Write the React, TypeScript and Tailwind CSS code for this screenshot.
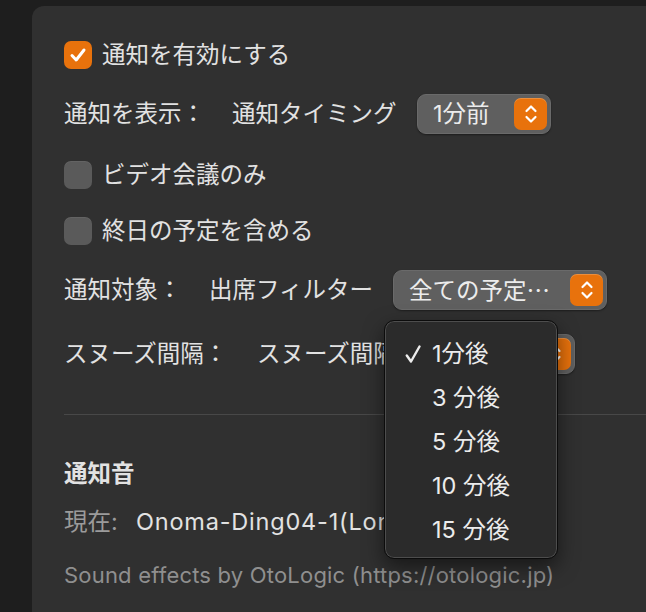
import React from "react"

const font = { fontFamily: '"Inter", "Noto Sans CJK JP", sans-serif' }
const jp = { fontFamily: '"Noto Sans CJK JP", sans-serif' }

function Stepper() {
  return (
    <div className="flex h-[32px] w-[33px] items-center justify-center rounded-[7px] bg-[#e8720c] shadow-[inset_0_1px_0_rgba(255,255,255,0.2)]">
      <svg width="14" height="22" viewBox="0 0 14 22" fill="none">
        <path d="M2.5 8 L7 3.5 L11.5 8" stroke="white" strokeWidth="2.2" strokeLinecap="round" strokeLinejoin="round" />
        <path d="M2.5 14 L7 18.5 L11.5 14" stroke="white" strokeWidth="2.2" strokeLinecap="round" strokeLinejoin="round" />
      </svg>
    </div>
  )
}

function Popup({ label, width }: { label: React.ReactNode; width: string }) {
  return (
    <div
      className={`flex h-[40px] ${width} items-center justify-between rounded-[9px] border border-[#6a6a6a] bg-[#5f5f5f] pl-[15px] pr-[3px] shadow-[0_1px_2px_rgba(0,0,0,0.4)]`}
    >
      <span className="text-[#ececec]">{label}</span>
      <Stepper />
    </div>
  )
}

function Checkbox({ checked }: { checked?: boolean }) {
  if (checked) {
    return (
      <div className="flex h-[28px] w-[28px] items-center justify-center rounded-[7px] bg-[#e8720c]">
        <svg width="18" height="16" viewBox="0 0 18 16" fill="none">
          <path d="M3 8.5 L7.2 13 L15 3" stroke="white" strokeWidth="3" strokeLinecap="round" strokeLinejoin="round" />
        </svg>
      </div>
    )
  }
  return <div className="h-[28px] w-[28px] rounded-[7px] bg-[#5a5a5a] shadow-[inset_0_1px_0_rgba(255,255,255,0.06)]" />
}

const items = ["1分後", "3 分後", "5 分後", "10 分後", "15 分後"]

export default function App() {
  return (
    <div
      className="relative h-[612px] w-[646px] overflow-hidden bg-[#1e1e1e] pl-[32px] pt-[6px] text-[23.5px] leading-none text-[#e2e2e2]"
      style={font}
    >
      <div className="flex h-full flex-col rounded-tl-[12px] bg-[#303030] pl-[32px] pt-[35px]">
        {/* Enable */}
        <div className="flex h-[28px] items-center gap-[10px]">
          <Checkbox checked />
          <span>通知を有効にする</span>
        </div>

        {/* Timing */}
        <div className="mt-[25px] flex h-[40px] items-center">
          <span className="w-[168px]">通知を表示：</span>
          <span className="w-[185px]">通知タイミング</span>
          <Popup label="1分前" width="w-[134px]" />
        </div>

        <div className="mt-[27px] flex h-[28px] items-center gap-[10px]">
          <Checkbox />
          <span>ビデオ会議のみ</span>
        </div>

        <div className="mt-[28px] flex h-[28px] items-center gap-[10px]">
          <Checkbox />
          <span>終日の予定を含める</span>
        </div>

        {/* Filter */}
        <div className="mt-[25px] flex h-[40px] items-center">
          <span className="w-[145px]">通知対象：</span>
          <span className="w-[184px]">出席フィルター</span>
          <Popup label={<span style={jp}>全ての予定…</span>} width="w-[214px]" />
        </div>

        {/* Snooze */}
        <div className="mt-[24px] flex h-[40px] items-center">
          <span className="w-[193px]">スヌーズ間隔：</span>
          <span className="w-[161px]">スヌーズ間隔</span>
          <Popup label="1分後" width="w-[157px]" />
        </div>

        <div className="mt-[40px] h-px bg-[#484848]" />

        {/* Sound */}
        <div className="mt-[44px] flex h-[30px] items-center font-bold">通知音</div>
        <div className="mt-[18px] flex h-[30px] items-center">
          <span className="w-[72px] text-[#9b9b9b]">現在:</span>
          <span className="tracking-[0.8px]">Onoma-Ding04-1(Long)</span>
        </div>
        <div className="mt-[23px] flex h-[30px] items-center text-[22px] tracking-[0.2px] text-[#8f8f8f]">
          Sound effects by OtoLogic (https://otologic.jp)
        </div>
      </div>

      {/* Snooze menu */}
      <div className="absolute left-[384px] top-[320px] h-[239px] w-[174px] rounded-[10px] border border-[#0c0c0c] bg-[#2b2b2b] pt-[11px] shadow-[inset_0_0_0_1px_rgba(255,255,255,0.16),0_8px_20px_rgba(0,0,0,0.5)]">
        {items.map((it, i) => (
          <div key={it} className="flex h-[44px] items-center text-[#ececec]">
            <div className="flex w-[47px] justify-end pr-[11px]">
              {i === 0 && (
                <svg width="16" height="20" viewBox="0 0 16 20" fill="none">
                  <path d="M1.8 11.5 L6 17.5 L14.5 2.5" stroke="#ececec" strokeWidth="2.4" strokeLinecap="round" strokeLinejoin="round" />
                </svg>
              )}
            </div>
            <span>{it}</span>
          </div>
        ))}
      </div>
    </div>
  )
}
